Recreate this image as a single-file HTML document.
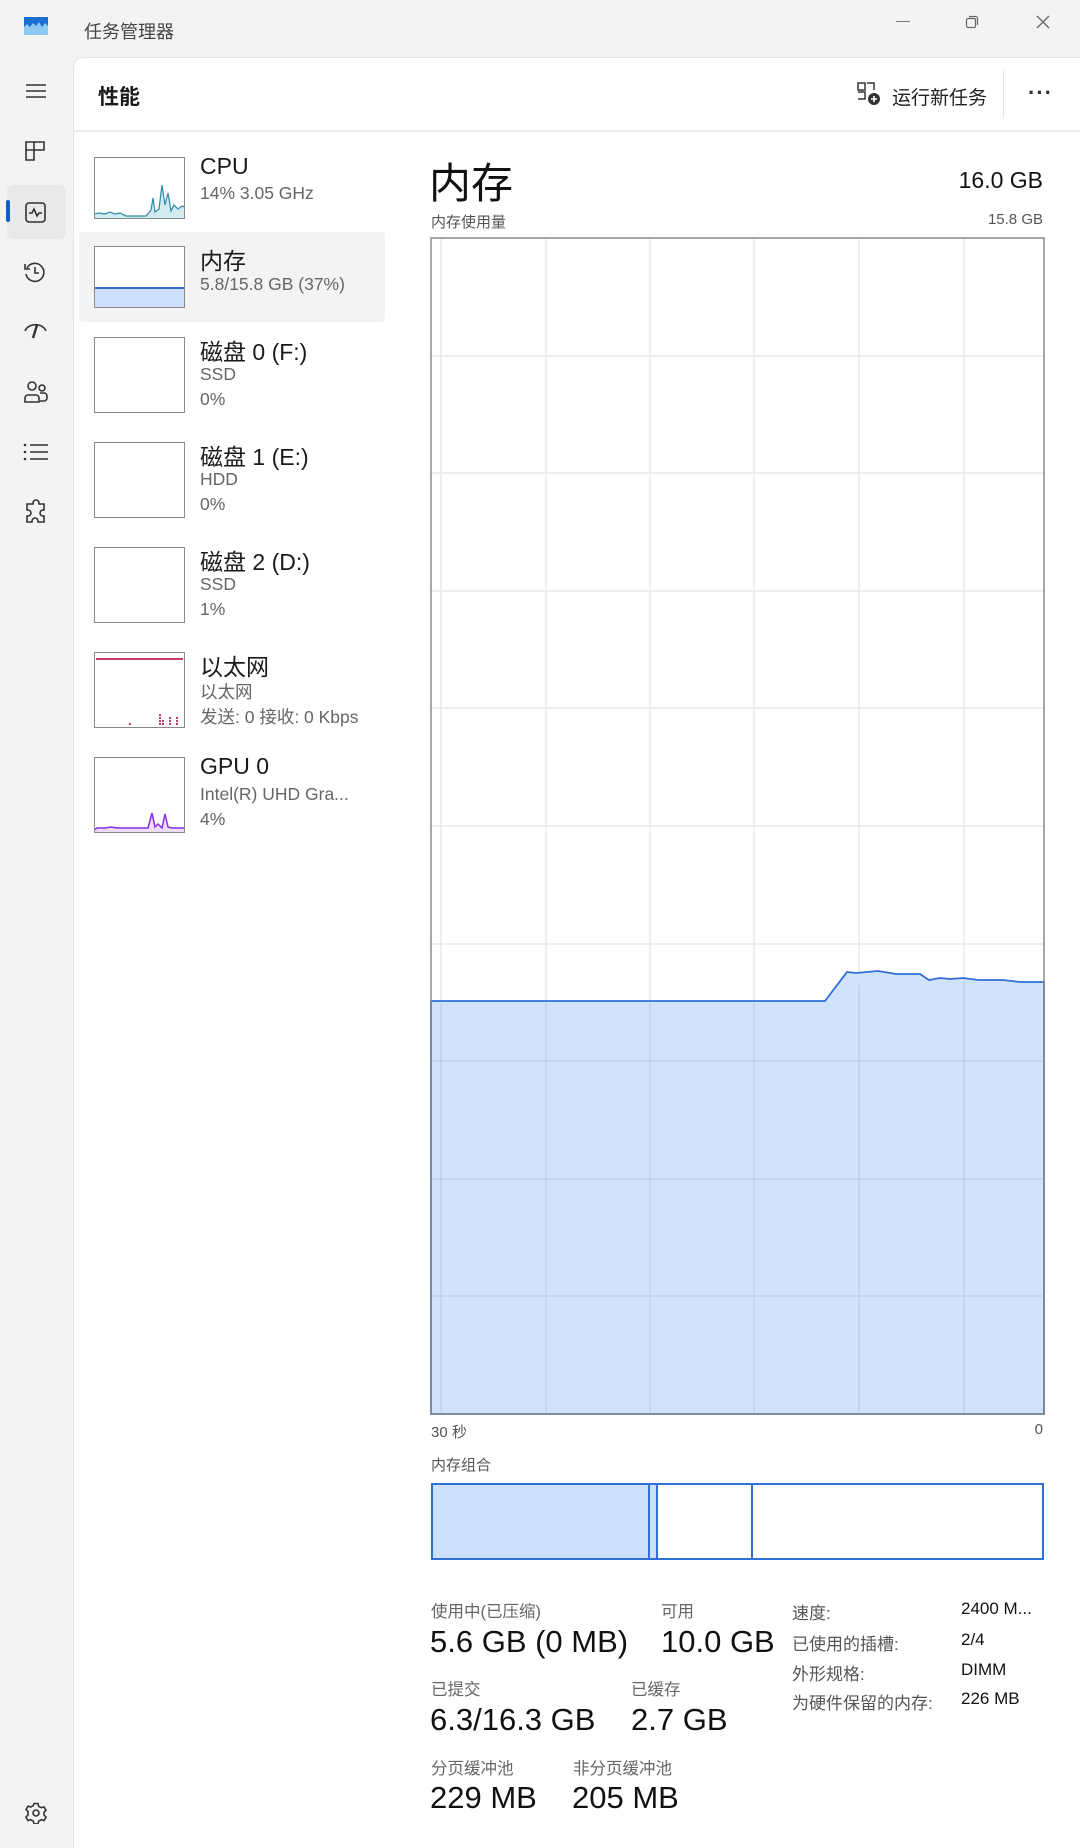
<!DOCTYPE html>
<html><head><meta charset="utf-8"><style>
*{margin:0;padding:0;box-sizing:border-box}
body{width:1080px;height:1848px;background:#f3f3f3;font-family:"Liberation Sans","Noto Sans CJK SC",sans-serif;position:relative;overflow:hidden;color:#1a1a1a}
.a{position:absolute;white-space:nowrap}
.panel{position:absolute;left:73px;top:57px;width:1007px;height:1791px;background:#fff;border-top-left-radius:10px;border-left:1px solid #e6e6e6;border-top:1px solid #e6e6e6}
.thumb{position:absolute;left:94px;width:91px;border:1.5px solid #8a8a8a;background:#fff;overflow:hidden}
.t1{font-size:23px;color:#1a1a1a}
.t2{font-size:17.5px;color:#666}
.lbl{font-size:16.5px;color:#666}
.val{font-size:31px;color:#111}
.rl{font-size:17px;color:#555}
.rv{font-size:17px;color:#111}
</style></head><body>
<svg class="a" style="left:24px;top:17px" width="24" height="18" viewBox="0 0 24 18"><rect width="24" height="18" fill="#8cc8f0"/><path d="M0 0h24v9l-3-3-3 4-3-5-3 4-3-3-3 4-3-3-3 3z" fill="#1a6ed0"/></svg>
<div class="a" style="left:84px;top:18px;font-size:18px;color:#444">任务管理器</div>
<div class="a" style="left:896px;top:21px;width:14px;height:1px;background:#777"></div>
<svg class="a" style="left:964px;top:14px" width="16" height="16" viewBox="0 0 16 16" fill="none" stroke="#666" stroke-width="1.2"><rect x="2.5" y="4.5" width="9" height="9" rx="1.5"/><path d="M5 2.5h6.5a2 2 0 0 1 2 2V11"/></svg>
<svg class="a" style="left:1035px;top:14px" width="16" height="16" viewBox="0 0 16 16" stroke="#666" stroke-width="1.3"><path d="M2 2L14 14M14 2L2 14"/></svg>
<svg class="a" style="left:25px;top:82px" width="22" height="18" stroke="#333" stroke-width="1.6"><path d="M1 3h20M1 9h20M1 15h20"/></svg>
<svg class="a" style="left:25px;top:141px" width="20" height="20" fill="none" stroke="#333" stroke-width="1.6"><path d="M1 1h18v8H9v10H1zM1 9h8M9 1v8"/></svg>
<div class="a" style="left:7px;top:185px;width:59px;height:54px;background:#e9e9e9;border-radius:6px"></div>
<div class="a" style="left:6px;top:200px;width:4px;height:22px;background:#0f5fc8;border-radius:2px"></div>
<svg class="a" style="left:25px;top:202px" width="21" height="21" fill="none" stroke="#333" stroke-width="1.6"><rect x="1" y="1" width="19" height="19" rx="3"/><path d="M4 11h3l2-4 3 7 2-3h3"/></svg>
<svg class="a" style="left:23px;top:260px" width="24" height="24" fill="none" stroke="#333" stroke-width="1.6"><path d="M4 8a9 9 0 1 1-1 6"/><path d="M2 4v5h5"/><path d="M12 7v6h4"/></svg>
<svg class="a" style="left:23px;top:321px" width="25" height="20" fill="none" stroke="#333" stroke-width="1.6"><path d="M2 10a11 9 0 0 1 21 0"/><path d="M14 4l-4 13" stroke-width="2.4"/></svg>
<svg class="a" style="left:23px;top:380px" width="26" height="24" fill="none" stroke="#333" stroke-width="1.6"><circle cx="9" cy="6" r="4"/><circle cx="19" cy="8" r="3"/><path d="M2 22v-4a3 3 0 0 1 3-3h8a3 3 0 0 1 3 3v4zM17 13h4a3 3 0 0 1 3 3v2a3 3 0 0 1-3 3h-4"/></svg>
<svg class="a" style="left:23px;top:443px" width="26" height="18" fill="#333" stroke="#333" stroke-width="1.6"><circle cx="2" cy="2" r="1.3" stroke="none"/><circle cx="2" cy="9" r="1.3" stroke="none"/><circle cx="2" cy="16" r="1.3" stroke="none"/><path d="M7 2h18M7 9h18M7 16h18"/></svg>
<svg class="a" style="left:24px;top:499px" width="24" height="26" fill="none" stroke="#333" stroke-width="1.6"><path d="M9 4a3 3 0 0 1 6 0v1h5v6h-1a3 3 0 0 0 0 6h1v6h-6v-1a3 3 0 0 0-6 0v1H3v-6h1a3 3 0 0 0 0-6H3V5h6z"/></svg>
<svg class="a" style="left:25px;top:1802px" width="22" height="22" fill="none" stroke="#333" stroke-width="1.6"><circle cx="11" cy="11" r="3"/><path d="M9 1.5h4l.7 2.8 2.5 1.4 2.8-.8 2 3.4-2 2 0 2.8 2 2-2 3.4-2.8-.8-2.5 1.4-.7 2.8H9l-.7-2.8-2.5-1.4-2.8.8-2-3.4 2-2V9.6l-2-2 2-3.4 2.8.8 2.5-1.4z"/></svg>
<div class="panel"></div>
<div class="a" style="left:74px;top:130px;width:1006px;height:2px;background:#ececec"></div>
<div class="a" style="left:98px;top:81px;font-size:21px;font-weight:bold;color:#1a1a1a">性能</div>
<svg class="a" style="left:857px;top:82px" width="24" height="24" fill="none" stroke="#333" stroke-width="1.5"><path d="M1 1h7v7H1zM10 1h7v7M1 10h7v7H1"/><circle cx="17" cy="17" r="6" fill="#333" stroke="none"/><path d="M17 14v6M14 17h6" stroke="#fff" stroke-width="1.6"/></svg>
<div class="a" style="left:892px;top:83px;font-size:19px;color:#222">运行新任务</div>
<div class="a" style="left:1003px;top:70px;width:1px;height:48px;background:#e5e5e5"></div>
<div class="a" style="left:1028px;top:80px;font-size:22px;font-weight:bold;color:#333;letter-spacing:1px">···</div>
<div class="a" style="left:79px;top:232px;width:306px;height:90px;background:#f3f3f3;border-radius:4px"></div>
<div class="thumb" style="top:157px;height:62px"><svg width="91" height="62" style="position:absolute;left:-1px;top:-1px"><path d="M0 57l5 -1 6 1 5-2 5 2 5-1 6 3h20l5-6 2-12 2 14 4-3 3-24 3 20 3-12 3 18 3-6 4 4 4-3 5 2V62H0z" fill="#d0ecf0" stroke="#2d8aa8" stroke-width="1.2"/></svg></div>
<div class="a t1" style="left:200px;top:153px">CPU</div>
<div class="a t2" style="left:200px;top:183px">14% 3.05 GHz</div>
<div class="thumb" style="top:246px;height:62px"><div style="position:absolute;left:0;right:0;bottom:0;height:20px;background:#cce0fb;border-top:2px solid #2f6fd6"></div></div>
<div class="a t1" style="left:200px;top:242px">内存</div>
<div class="a t2" style="left:200px;top:274px">5.8/15.8 GB (37%)</div>
<div class="thumb" style="top:337px;height:76px"></div>
<div class="a t1" style="left:200px;top:333px">磁盘 0 (F:)</div>
<div class="a t2" style="left:200px;top:364px">SSD</div>
<div class="a t2" style="left:200px;top:389px">0%</div>
<div class="thumb" style="top:442px;height:76px"></div>
<div class="a t1" style="left:200px;top:438px">磁盘 1 (E:)</div>
<div class="a t2" style="left:200px;top:469px">HDD</div>
<div class="a t2" style="left:200px;top:494px">0%</div>
<div class="thumb" style="top:547px;height:76px"></div>
<div class="a t1" style="left:200px;top:543px">磁盘 2 (D:)</div>
<div class="a t2" style="left:200px;top:574px">SSD</div>
<div class="a t2" style="left:200px;top:599px">1%</div>
<div class="thumb" style="top:652px;height:76px"><div style="position:absolute;left:1px;right:1px;top:5px;height:2px;background:#c8386a"></div><svg width="91" height="76" style="position:absolute;left:0;top:0"><path d="M35 72v-3M65 72v-12M68 72v-6M75 72v-8M82 72v-9" stroke="#c8386a" stroke-width="2" stroke-dasharray="2 1"/></svg></div>
<div class="a t1" style="left:200px;top:648px">以太网</div>
<div class="a t2" style="left:200px;top:679px">以太网</div>
<div class="a t2" style="left:200px;top:704px">发送: 0 接收: 0 Kbps</div>
<div class="thumb" style="top:757px;height:76px"><svg width="91" height="76" style="position:absolute;left:-1px;top:-1px"><path d="M0 73l3-2 8 0 6-1 6 1 31 0 4-15 3 14 3-3 4 4 3-14 3 13 4 1 14 0V76H0z" fill="#ebdcfb" stroke="#8a2be2" stroke-width="1.5"/></svg></div>
<div class="a t1" style="left:200px;top:753px">GPU 0</div>
<div class="a t2" style="left:200px;top:784px">Intel(R) UHD Gra...</div>
<div class="a t2" style="left:200px;top:809px">4%</div>
<div class="a" style="left:429px;top:150px;font-size:42px;color:#111">内存</div>
<div class="a" style="left:900px;top:167px;width:143px;text-align:right;font-size:23px;color:#111">16.0 GB</div>
<div class="a" style="left:431px;top:211px;font-size:15px;color:#555">内存使用量</div>
<div class="a" style="left:900px;top:211px;width:143px;text-align:right;font-size:15px;color:#555">15.8 GB</div>
<svg class="a" style="left:430px;top:237px" width="615" height="1178" viewBox="430 237 615 1178">
<rect x="431" y="238" width="613" height="1176" fill="#fff"/>
<g stroke="#e8e8e8" stroke-width="1.5">
<path d="M441 238v1176M546 238v1176M650 238v1176M754 238v1176M859 238v1176M964 238v1176"/>
<path d="M431 356h613M431 473h613M431 591h613M431 708h613M431 826h613M431 944h613M431 1061h613M431 1179h613M431 1296h613"/>
</g>
<path d="M431 1001H825L847 972 856 973 878 971 896 974 920 974 929 980 940 978 950 979 963 978 978 980 1003 980 1020 982 1044 982V1414H431z" fill="#cce0fb" fill-opacity=".9" stroke="#2f6fd6" stroke-width="1.8"/>
<g stroke="#b8cdea" stroke-width="1.2">
<path d="M441 1003v411M546 1003v411M650 1003v411M754 1003v411M859 985v429M964 982v432"/>
<path d="M431 1061h613M431 1179h613M431 1296h613"/>
</g>
<rect x="431" y="238" width="613" height="1176" fill="none" stroke="#8a8a8a" stroke-width="1.5"/>
</svg>
<div class="a" style="left:431px;top:1421px;font-size:15px;color:#555">30 秒</div>
<div class="a" style="left:1030px;top:1421px;width:13px;text-align:right;font-size:15px;color:#555">0</div>
<div class="a" style="left:431px;top:1454px;font-size:15px;color:#555">内存组合</div>
<div class="a" style="left:431px;top:1483px;width:613px;height:77px;border:2px solid #2f6fd6;background:#fff"></div>
<div class="a" style="left:433px;top:1485px;width:215px;height:73px;background:#cce0fb"></div>
<div class="a" style="left:648px;top:1485px;width:2px;height:73px;background:#2f6fd6"></div>
<div class="a" style="left:650px;top:1485px;width:6px;height:73px;background:#cce0fb"></div>
<div class="a" style="left:656px;top:1485px;width:2px;height:73px;background:#2f6fd6"></div>
<div class="a" style="left:751px;top:1485px;width:2px;height:73px;background:#2f6fd6"></div>
<div class="a lbl" style="left:431px;top:1598px">使用中(已压缩)</div>
<div class="a val" style="left:430px;top:1624px">5.6 GB (0 MB)</div>
<div class="a lbl" style="left:661px;top:1598px">可用</div>
<div class="a val" style="left:661px;top:1624px">10.0 GB</div>
<div class="a lbl" style="left:431px;top:1676px">已提交</div>
<div class="a val" style="left:430px;top:1702px">6.3/16.3 GB</div>
<div class="a lbl" style="left:631px;top:1676px">已缓存</div>
<div class="a val" style="left:631px;top:1702px">2.7 GB</div>
<div class="a lbl" style="left:431px;top:1755px">分页缓冲池</div>
<div class="a val" style="left:430px;top:1780px">229 MB</div>
<div class="a lbl" style="left:573px;top:1755px">非分页缓冲池</div>
<div class="a val" style="left:572px;top:1780px">205 MB</div>
<div class="a rl" style="left:792px;top:1599px">速度:</div>
<div class="a rv" style="left:961px;top:1599px">2400 M...</div>
<div class="a rl" style="left:792px;top:1630px">已使用的插槽:</div>
<div class="a rv" style="left:961px;top:1630px">2/4</div>
<div class="a rl" style="left:792px;top:1660px">外形规格:</div>
<div class="a rv" style="left:961px;top:1660px">DIMM</div>
<div class="a rl" style="left:792px;top:1689px">为硬件保留的内存:</div>
<div class="a rv" style="left:961px;top:1689px">226 MB</div>
</body></html>
